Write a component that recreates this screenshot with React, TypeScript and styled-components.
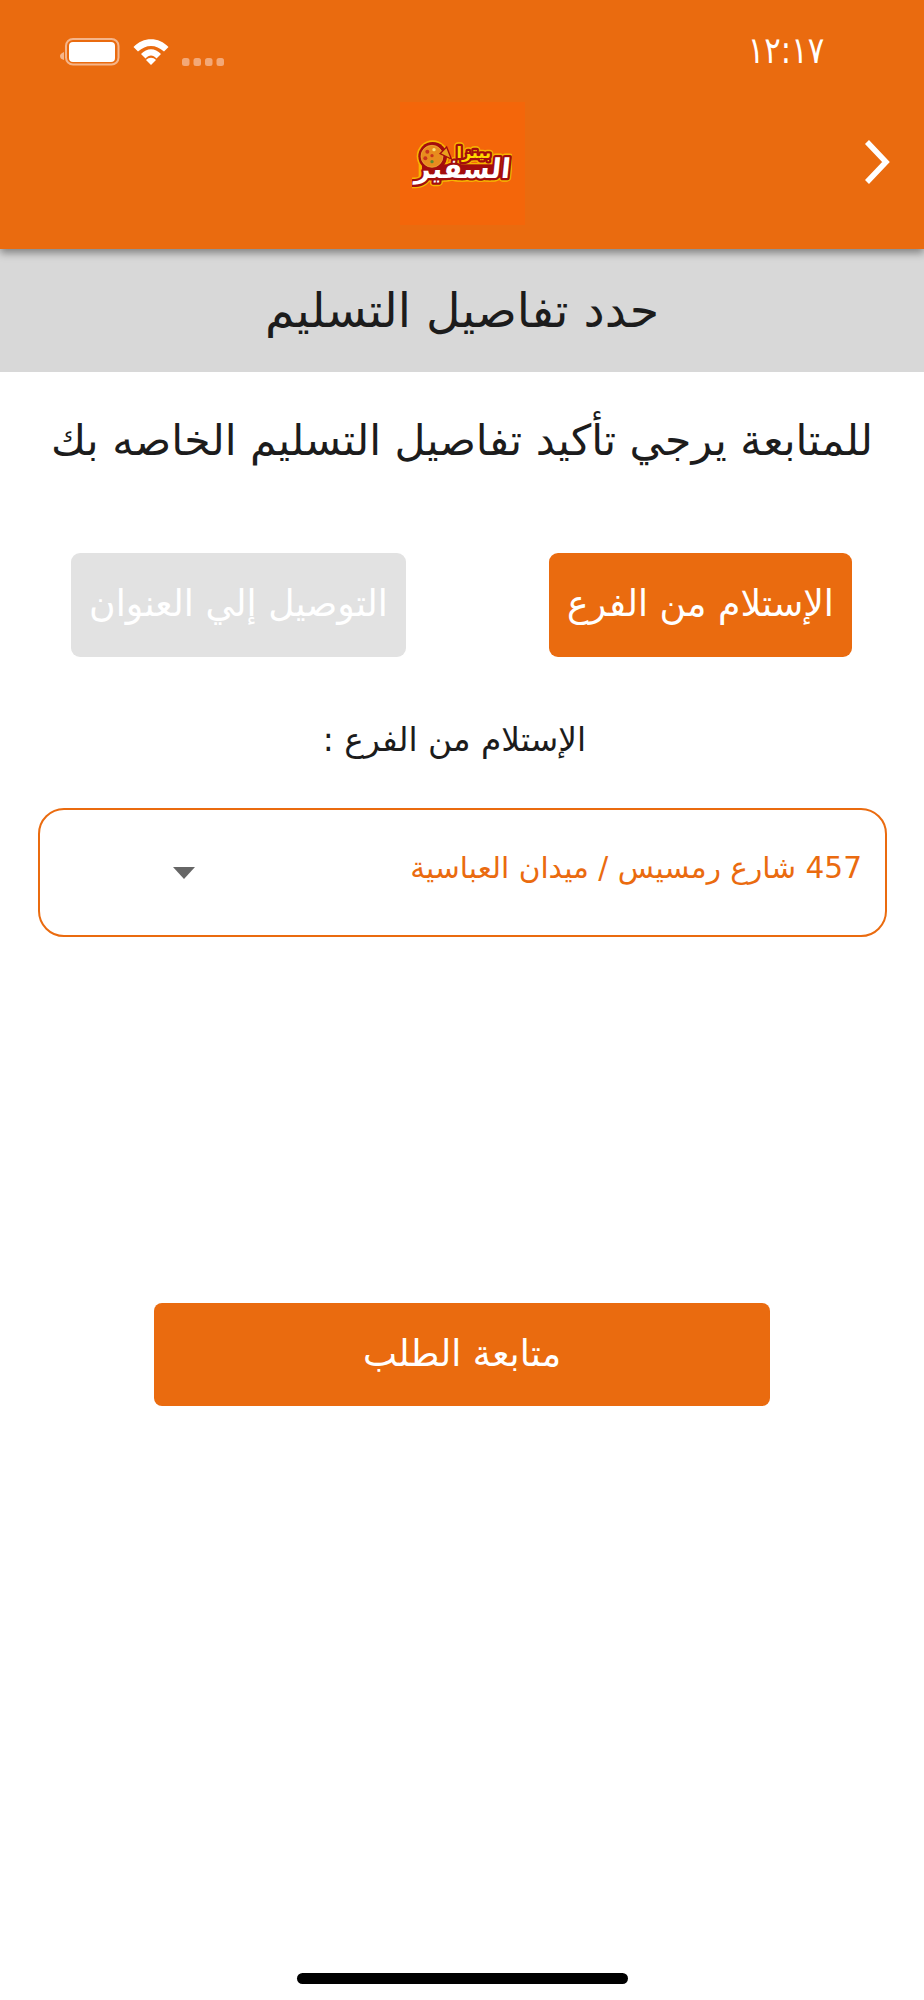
import React from "react";
import styled, { createGlobalStyle } from "styled-components";

const Global = createGlobalStyle`
  html, body { margin: 0; padding: 0; background: #fff; }
  body { font-family: "DejaVu Sans", sans-serif; }
  * { box-sizing: border-box; }
`;

const Page = styled.div`
  width: 924px;
  height: 2000px;
  display: flex;
  flex-direction: column;
  background: #fff;
  overflow: hidden;
`;

const Header = styled.header`
  height: 249px;
  flex: none;
  background: #ea6b0f;
  box-shadow: 0 4px 8px rgba(0, 0, 0, 0.4);
  position: relative;
  z-index: 1;
  display: flex;
  flex-direction: column;
`;

const StatusBar = styled.div`
  height: 102px;
  flex: none;
  display: flex;
  align-items: flex-start;
  justify-content: space-between;
  padding: 38px 92px 0 60px;
`;

const StatusIcons = styled.div`
  display: flex;
  align-items: flex-start;
  gap: 13px;
`;

const Clock = styled.div`
  font-size: 37px;
  line-height: 26px;
  color: #fff;
  transform: scaleX(0.83);
`;

const NavRow = styled.div`
  flex: 1;
  display: grid;
  grid-template-columns: 1fr 125px 1fr;
  align-items: start;
`;

const LogoBlock = styled.div`
  grid-column: 2;
  width: 125px;
  height: 123px;
  background: #f4660a;
  display: flex;
  align-items: center;
  justify-content: center;
`;

const Back = styled.div`
  grid-column: 3;
  justify-self: end;
  margin: 38px 34px 0 0;
  display: flex;
`;

const TitleBand = styled.div`
  height: 123px;
  flex: none;
  background: #d8d8d8;
  display: flex;
  align-items: center;
  justify-content: center;
  font-size: 47.5px;
  color: #1c1c1c;
  direction: rtl;
`;

const Instruction = styled.div`
  margin-top: 36px;
  height: 64px;
  display: flex;
  align-items: center;
  justify-content: center;
  direction: rtl;
  font-size: 42.6px;
  color: #1c1c1c;
`;

const Choices = styled.div`
  margin-top: 81px;
  padding: 0 72px 0 71px;
  display: flex;
  justify-content: space-between;
`;

const Choice = styled.button<{ $active?: boolean; $w: number }>`
  width: ${(p) => p.$w}px;
  height: 104px;
  border: 0;
  border-radius: 9px;
  padding: 0 0 3px;
  background: ${(p) => (p.$active ? "#ea6b0f" : "#e2e2e2")};
  color: #fff;
  font-family: inherit;
  font-size: 36.2px;
  direction: rtl;
  white-space: nowrap;
`;

const Label = styled.div`
  margin-top: 60px;
  height: 46px;
  padding-right: 15px;
  display: flex;
  align-items: center;
  justify-content: center;
  direction: ltr;
  font-size: 32.8px;
  color: #1c1c1c;
`;

const LabelText = styled.span`
  direction: rtl;
`;

const Select = styled.div`
  margin: 45px 37px 0 38px;
  height: 129px;
  border: 2px solid #ea6b0f;
  border-radius: 26px;
  display: flex;
  align-items: center;
  justify-content: space-between;
  padding: 0 23px 0 133px;
`;

const Caret = styled.div`
  width: 0;
  height: 0;
  border-left: 11px solid transparent;
  border-right: 11px solid transparent;
  border-top: 12px solid #666;
  margin-top: 1px;
`;

const SelectText = styled.div`
  direction: rtl;
  font-size: 29.6px;
  color: #ea6b0f;
  white-space: nowrap;
  padding-bottom: 9px;
`;

const Continue = styled.button`
  margin: 366px auto 0;
  width: 616px;
  height: 103px;
  border: 0;
  border-radius: 8px;
  padding: 0 0 3px;
  background: #ea6b0f;
  color: #fff;
  font-family: inherit;
  font-size: 36.2px;
  direction: rtl;
  flex: none;
`;

const Spacer = styled.div`
  flex: 1;
`;

const HomeBar = styled.div`
  width: 331px;
  height: 11px;
  border-radius: 6px;
  background: #000;
  margin: 0 auto 16px;
  flex: none;
`;

const Battery = () => (
  <svg width="60" height="28" viewBox="0 0 60 28">
    <path d="M4 14 C1 15 0 17 0 18 C0 20 1 21 4 22 Z" fill="#f5b58a" />
    <rect x="6" y="1" width="52.5" height="25.5" rx="7" fill="none" stroke="#f5b58a" strokeWidth="2" />
    <rect x="9" y="4" width="46" height="20" rx="4" fill="#fff" />
  </svg>
);

const Wifi = () => (
  <svg width="36" height="28" viewBox="0 0 36 28">
    <path d="M0.5 9 C10 -1.5 26 -1.5 35.5 9 L31 13.5 C23 6 13 6 5 13.5 Z" fill="#fff" />
    <path d="M8 16 C14 9.5 22 9.5 28 16 L23.5 20.5 C20 16.5 16 16.5 12.5 20.5 Z" fill="#fff" />
    <path d="M13 22 C16 19 20 19 23 22 L18 27 Z" fill="#fff" />
  </svg>
);

const Signal = () => (
  <svg width="42" height="28" viewBox="0 0 42 28">
    {[0, 11.5, 23, 34.5].map((x) => (
      <rect key={x} x={x} y="20" width="7.5" height="8" rx="2.5" fill="#f3a877" />
    ))}
  </svg>
);

const LogoLayer = ({ stroke, width, fillTop, fillBottom }: { stroke: string; width: number; fillTop: string; fillBottom: string }) => (
  <g stroke={stroke} strokeWidth={width} strokeLinejoin="round" fontWeight={700} fontFamily="DejaVu Sans" textAnchor="middle">
    <text x="185" y="56" fontSize="48" fill={fillTop} direction="rtl">بيتزا</text>
    <text x="150" y="116" fontSize="82" fill={fillBottom} direction="rtl" transform="skewX(-6) translate(12 0)">السفير</text>
  </g>
);

const Logo = () => (
  <svg width="100" height="50" viewBox="0 0 300 150">
    <circle cx="62" cy="52" r="48" fill="#f7b500" />
    <rect x="20" y="72" width="255" height="48" fill="#f7b500" />
    <LogoLayer stroke="#f7b500" width={22} fillTop="#f7b500" fillBottom="#f7b500" />
    <circle cx="62" cy="52" r="43" fill="#a30d0d" />
    <rect x="30" y="76" width="238" height="40" fill="#a30d0d" />
    <LogoLayer stroke="#a30d0d" width={14} fillTop="#a30d0d" fillBottom="#a30d0d" />
    <circle cx="60" cy="52" r="33" fill="#e88c1e" stroke="#f0c040" strokeWidth="2" />
    <circle cx="46" cy="38" r="6" fill="#c8341c" />
    <circle cx="66" cy="32" r="5" fill="#f9e27a" />
    <circle cx="40" cy="58" r="6" fill="#c8341c" />
    <circle cx="60" cy="68" r="5" fill="#5d8a2c" />
    <circle cx="60" cy="50" r="5" fill="#c8341c" />
    <path d="M84 44 L104 24 L118 60 Z" fill="#e9a11c" stroke="#a30d0d" strokeWidth="4" />
    <LogoLayer stroke="none" width={0} fillTop="#ffd800" fillBottom="#fff" />
  </svg>
);

const Chevron = () => (
  <svg width="26" height="44" viewBox="0 0 26 44">
    <path d="M3 2 L22 22 L3 42" fill="none" stroke="#fff" strokeWidth="5.5" />
  </svg>
);

export default function App() {
  return (
    <>
      <Global />
      <Page>
        <Header>
          <StatusBar>
            <StatusIcons>
              <Battery />
              <Wifi />
              <Signal />
            </StatusIcons>
            <Clock>١٢:١٧</Clock>
          </StatusBar>
          <NavRow>
            <LogoBlock>
              <Logo />
            </LogoBlock>
            <Back>
              <Chevron />
            </Back>
          </NavRow>
        </Header>
        <TitleBand>حدد تفاصيل التسليم</TitleBand>
        <Instruction>للمتابعة يرجي تأكيد تفاصيل التسليم الخاصه بك</Instruction>
        <Choices>
          <Choice $w={335}>التوصيل إلي العنوان</Choice>
          <Choice $active $w={303}>الإستلام من الفرع</Choice>
        </Choices>
        <Label>
          <LabelText>الإستلام من الفرع :</LabelText>
        </Label>
        <Select>
          <Caret />
          <SelectText>457 شارع رمسيس / ميدان العباسية</SelectText>
        </Select>
        <Continue>متابعة الطلب</Continue>
        <Spacer />
        <HomeBar />
      </Page>
    </>
  );
}
